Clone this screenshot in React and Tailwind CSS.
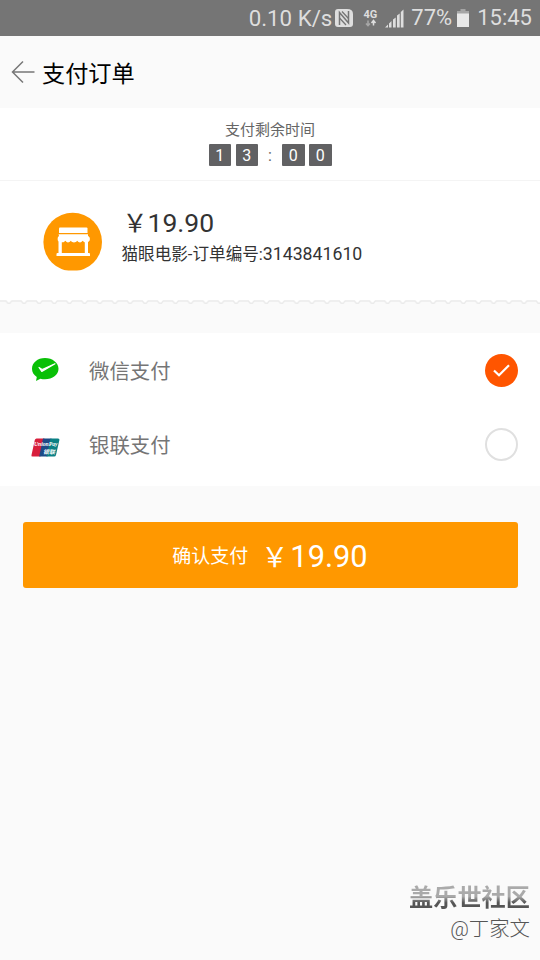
// src/App.jsx
import React from 'react';

const METHODS = [
  { id: 'wechat', label: '微信支付', Icon: WechatIcon },
  { id: 'unionpay', label: '银联支付', Icon: UnionPayIcon },
];

function StatusBar() {
  return (
    <div className="flex h-9 items-center justify-end bg-[#757575] pr-[8px] text-[22.3px] leading-9 text-[#dedede]">
      <span>0.10 K/s</span>
      <svg className="ml-[3px] h-[18px] w-[18px]" viewBox="0 0 18 18">
        <path d="M3 0h9q6 0 6 5v10q0 3-3 3H3q-3 0-3-3V3q0-3 3-3z" fill="#dedede" />
        <path d="M4.500 16V3.500L13.500 14V2" fill="none" stroke="#757575" strokeWidth="1.500" />
        <path d="M7 2.500L13.500 9.500M4.500 9L11 16" fill="none" stroke="#757575" strokeWidth="1.300" />
      </svg>
      <svg className="ml-[10px] h-[20px] w-[17px]" viewBox="0 0 17 20">
        <text x="0.500" y="9.500" fontFamily="Roboto, sans-serif" fontSize="11" fontWeight="700" fill="#dedede">4G</text>
        <path d="M5 12.500v5M3 15.500l2 2.200 2-2.200" fill="none" stroke="#a8a8a8" strokeWidth="1.500" />
        <path d="M10.500 17.500v-5M8.500 15l2-2.500 2 2.500" fill="none" stroke="#dedede" strokeWidth="1.500" />
      </svg>
      <svg className="ml-[5px] h-[19px] w-[19px]" viewBox="0 0 19 19" fill="#dedede">
        <path d="M0 18.500l3-3v3zM4 14.500l2.500-2.500v6.500H4zM8 10.500l2.700-2v10H8zM12 6.500l2.700-2v14H12zM15.800 3l2.700-2.500v18h-2.700z" />
      </svg>
      <span className="ml-[7px] text-[22px]">77%</span>
      <svg className="ml-[5px] h-[18px] w-[12px]" viewBox="0 0 12 18">
        <path d="M3.500 0h5v2H12v4H0V2h3.500z" fill="#a5a5a5" />
        <path d="M0 4.500h12V18H0z" fill="#e8e8e8" />
      </svg>
      <span className="ml-[8px] text-[22px]">15:45</span>
    </div>
  );
}

function Digit({ children }) {
  return (
    <span className="h-[22px] w-[22.5px] rounded-[1px] bg-[#616163] text-center text-[16px] leading-[23px] text-white">
      {children}
    </span>
  );
}

function ShopIcon() {
  return (
    <svg className="h-[60px] w-[60px] shrink-0" viewBox="0 0 60 60">
      <clipPath id="shop-disc"><rect width="60" height="58.500" /></clipPath>
      <circle cx="29.700" cy="30" r="29.300" fill="#ff9800" clipPath="url(#shop-disc)" />
      <g fill="#fff">
        <path d="M17 15.500h26.500q1 0 1 1V21h-28.500v-4.500q0-1 1-1z" />
        <path d="M15.500 22.200h29.500v1.500l1.800 2v2.500l-1.800 2h-3.500l-2-1.500c-.8 1.200-1.500 1.700-2.500 1.700s-2-.5-2.700-1.700c-1 1.200-2 1.700-3.300 1.700s-2.300-.5-3.300-1.700c-.7 1.200-1.700 1.700-2.700 1.700s-1.700-.5-2.500-1.700l-2 1.500h-4l-1.800-2v-2.500l1.300-2z" />
        <path d="M15.500 28h3.300v13h23V28H45v13h1q1 0 1 1v2H13.500v-2q0-1 1-1h1z" />
      </g>
    </svg>
  );
}

function TicketEdge() {
  return (
    <svg className="block h-[5px] w-full" viewBox="0 0 540 5">
      <defs>
        <pattern id="notch" x="1" width="15.150" height="5" patternUnits="userSpaceOnUse">
          <path d="M5 0H10.700L9 3H6.700z" fill="#fff" />
          <path d="M0 1H5L6.800 3.200H8.900L10.700 1H15.150" fill="none" stroke="#ebebeb" strokeWidth="1.400" />
        </pattern>
      </defs>
      <rect width="540" height="5" fill="url(#notch)" />
    </svg>
  );
}

function WechatIcon() {
  return (
    <svg className="h-[26px] w-[28px]" viewBox="0 0 28 26">
      <path d="M14 1C6.500 1 1 5.800 1 11.800c0 3.500 1.800 6.300 4.800 8.200l-.8 4 4.400-2.300c1.500.4 3 .6 4.600.6 7.500 0 13.500-4.500 13.500-10.500S21.500 1 14 1z" fill="#09c007" />
      <path d="M8 10.500L10.800 14.500 24 6.800 11.200 12.500z" fill="#fff" stroke="#fff" strokeWidth="1.200" strokeLinejoin="round" />
    </svg>
  );
}

function UnionPayIcon() {
  return (
    <svg className="mt-[6px] h-[19px] w-[29px] overflow-visible" viewBox="0 0 29 19">
      <path d="M5.500.5h8L9.500 18.500h-8Q0 18.500.5 17L3.800 2Q4.200.5 5.500.5z" fill="#d81e3c" />
      <path d="M12 .5h8.500L16.500 18.500H8.200z" fill="#1c4a86" />
      <path d="M19.500.5h7.500Q28.800.5 28.400 2L25 17q-.4 1.500-1.800 1.500h-7.700z" fill="#0b8084" />
      <text x="3" y="8" textLength="23.500" lengthAdjust="spacingAndGlyphs" fontFamily="Liberation Serif, serif" fontSize="6.500" fontStyle="italic" fontWeight="700" fill="#fff">UnionPay</text>
      <text x="12" y="15.500" textLength="12" lengthAdjust="spacingAndGlyphs" fontFamily="Noto Sans CJK SC, sans-serif" fontSize="5.500" fontStyle="italic" fontWeight="700" fill="#fff">银联</text>
    </svg>
  );
}

function Radio({ checked }) {
  if (!checked) return <span className="mt-px h-[33px] w-[33px] rounded-full border-2 border-[#e0e0e0] bg-white" />;
  return (
    <svg className="h-[33px] w-[33px]" viewBox="0 0 33 33">
      <circle cx="16.500" cy="16.500" r="16.500" fill="#ff5500" />
      <path d="M9 16.500l5 4.800L24 11.300" fill="none" stroke="#fff" strokeWidth="2.200" />
    </svg>
  );
}

export default function App() {
  const selected = 'wechat';

  return (
    <div className="flex h-[960px] w-[540px] flex-col overflow-hidden bg-[#fafafa] font-[Roboto,'Noto_Sans_CJK_SC',sans-serif]">
      <StatusBar />

      <header className="flex h-[72px] items-center pl-[11px]">
        <svg className="h-[24px] w-[24px]" viewBox="0 0 24 24" fill="none" stroke="#777" strokeWidth="1.500">
          <path d="M23.500 12H1.500M12 1.500L1.500 12 12 22.500" />
        </svg>
        <h1 className="ml-[7px] pt-[4px] text-[23.2px] leading-8 text-black">支付订单</h1>
      </header>

      {/* 倒计时 */}
      <section className="flex h-[73px] flex-col items-center border-b border-[#f4f4f4] bg-white pt-[11px]">
        <div className="text-[15px] leading-[22px] text-[#666]">支付剩余时间</div>
        <div className="mt-[3px] flex gap-[4.5px]">
          <Digit>1</Digit>
          <Digit>3</Digit>
          <span className="w-[15px] text-center text-[16px] leading-[23px] text-[#666]">:</span>
          <Digit>0</Digit>
          <Digit>0</Digit>
        </div>
      </section>

      {/* 订单信息 */}
      <section className="flex h-[119px] bg-white pl-[43px] pt-[31px]">
        <ShopIcon />
        <div className="ml-[18.5px] -mt-[6px] text-[#333]">
          <div className="flex h-[34px] items-baseline text-[26.5px] leading-[34px]">
            <span className="ml-[1px] text-[25px]">￥</span>
            <span>19.90</span>
          </div>
          <div className="mt-[2px] flex items-baseline text-[16.6px] leading-[24px]">
            <span>猫眼电影-订单编号:</span>
            <span className="text-[17.7px]">3143841610</span>
          </div>
        </div>
      </section>
      <TicketEdge />

      {/* 支付方式 */}
      <section className="mt-[28px] flex h-[153px] flex-col bg-white">
        {METHODS.map(({ id, label, Icon }) => (
          <div key={id} className="flex h-[74px] items-center pl-[31px] pr-[22.5px]">
            <div className="flex w-[58px]">
              <Icon />
            </div>
            <span className="flex-1 pt-[4px] text-[20.4px] leading-8 text-[#757575]">{label}</span>
            <Radio checked={id === selected} />
          </div>
        ))}
      </section>

      <button className="mx-[22.5px] mt-[36px] flex h-[66px] shrink-0 items-center justify-center rounded-[3px] bg-[#ff9800] pt-[4px] text-white">
        <span className="pt-px text-[19px]">确认支付</span>
        <span className="ml-[13px] flex items-baseline text-[30.8px]">
          <span className="mr-[2px] text-[27px]">￥</span>
          <span>19.90</span>
        </span>
      </button>

      <footer className="mt-auto flex flex-col items-end pb-[16px] pr-[10px]">
        <div className="bg-linear-to-b from-[#aaa] from-45% to-[#555] to-65% bg-clip-text text-[24.2px] font-bold leading-[32px] text-transparent">盖乐世社区</div>
        <div className="text-[20.4px] font-light leading-[30px] text-[#555]">@丁家文</div>
      </footer>
    </div>
  );
}
